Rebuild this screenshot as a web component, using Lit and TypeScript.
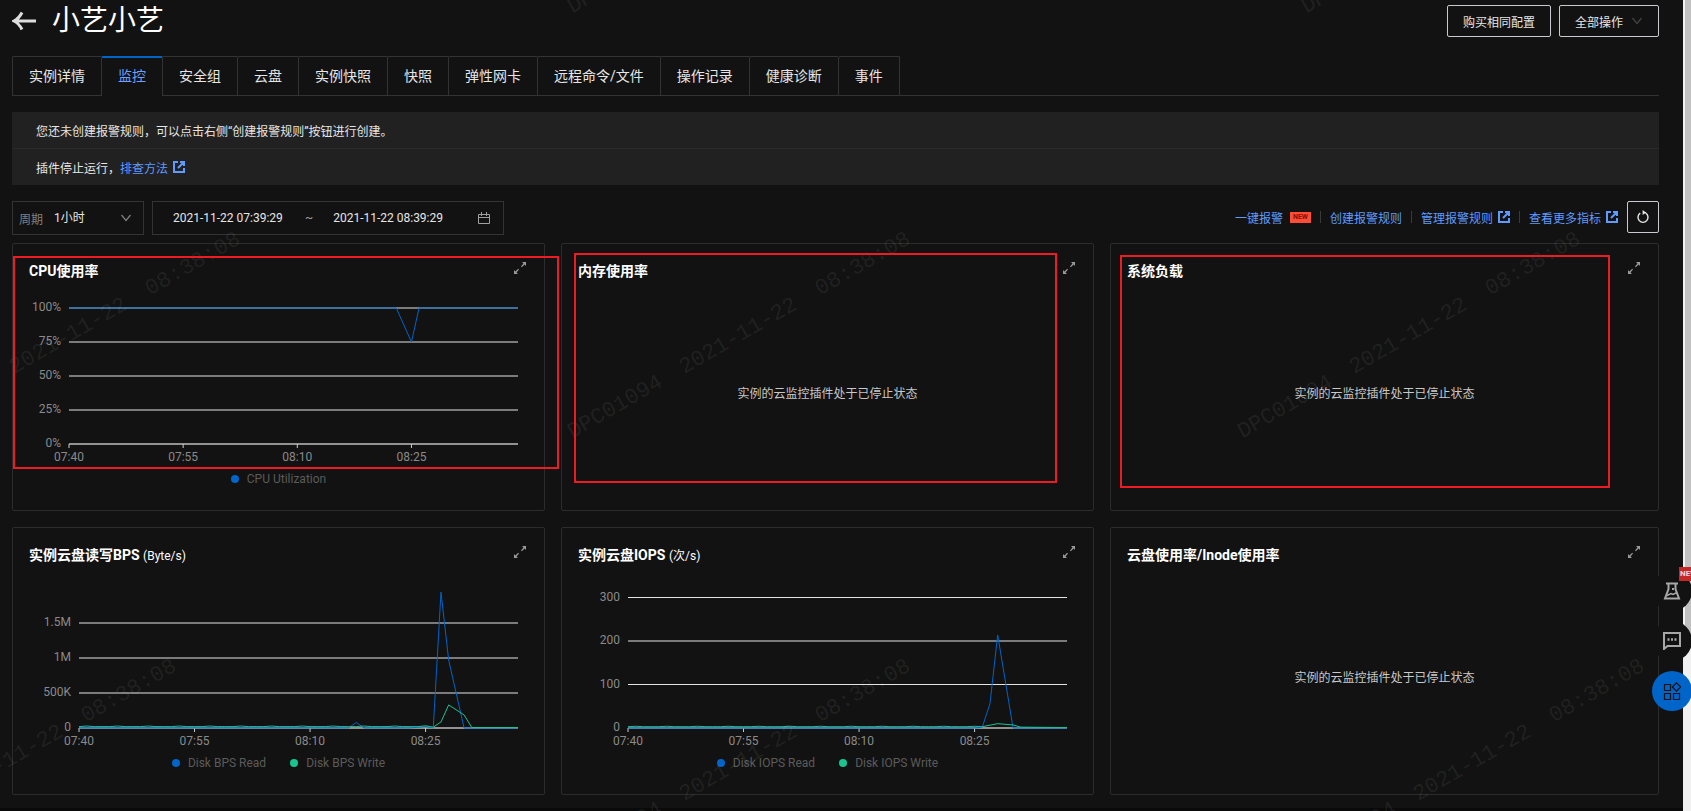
import { LitElement, html, svg, css, nothing } from "lit";
import { customElement, property, state } from "lit/decorators.js";
import { classMap } from "lit/directives/class-map.js";

interface Series {
  name: string;
  color: string;
  points: [number, number][];
}

interface ChartSpec {
  x0: number;
  minutes: number;
  unitHeight: number;
  ticks: { value: number; label: string }[];
  series: Series[];
}

interface CardSpec {
  title: string;
  unit?: string;
  mark?: string;
  chart?: ChartSpec;
}

const BLUE = "#0064c8";
const GREEN = "#1ac392";
const EMPTY_TEXT = "实例的云监控插件处于已停止状态";

/* Idle traffic with a slight ripple, up to the given minute. */
const idle = (until: number, value: number, ripple: number): [number, number][] =>
  Array.from({ length: until }, (_, m) => [m, value + (m % 4 === 1 ? ripple : 0)] as [number, number]);

const cards: CardSpec[] = [
  {
    title: "CPU使用率",
    mark: "mark-a",
    chart: {
      x0: 40,
      minutes: 59,
      unitHeight: 136 / 100,
      ticks: [0, 25, 50, 75, 100].map((value) => ({ value, label: `${value}%` })),
      series: [
        { name: "CPU Utilization", color: BLUE, points: [[0, 100], [43, 100], [45, 75], [46, 100], [59, 100]] },
      ],
    },
  },
  { title: "内存使用率", mark: "mark-b" },
  { title: "系统负载", mark: "mark-c" },
  {
    title: "实例云盘读写BPS",
    unit: "(Byte/s)",
    chart: {
      x0: 50,
      minutes: 57,
      unitHeight: 70 / 1000,
      ticks: [
        { value: 0, label: "0" },
        { value: 500, label: "500K" },
        { value: 1000, label: "1M" },
        { value: 1500, label: "1.5M" },
      ],
      series: [
        {
          name: "Disk BPS Read",
          color: BLUE,
          points: [[0, 2], [35, 2], [36, 79], [37, 2], [43, 2], [45, 20], [46, 2], [47, 1940], [48, 970], [50, 0], [57, 0]],
        },
        {
          name: "Disk BPS Write",
          color: GREEN,
          points: [...idle(45, 20, 8), [45, 32], [46, 12], [47, 86], [48, 330], [50, 186], [51, 7], [57, 7]],
        },
      ],
    },
  },
  {
    title: "实例云盘IOPS",
    unit: "(次/s)",
    chart: {
      x0: 50,
      minutes: 57,
      unitHeight: 43.5 / 100,
      ticks: [0, 100, 200, 300].map((value) => ({ value, label: `${value}` })),
      series: [
        {
          name: "Disk IOPS Read",
          color: BLUE,
          points: [[0, 0], [45, 0], [46, 2], [47, 56], [48, 214], [50, 0], [57, 0]],
        },
        {
          name: "Disk IOPS Write",
          color: GREEN,
          points: [...idle(46, 3, 1), [46, 3], [48, 10], [50, 7], [51, 2], [57, 1]],
        },
      ],
    },
  },
  { title: "云盘使用率/Inode使用率" },
];

const tabs = ["实例详情", "监控", "安全组", "云盘", "实例快照", "快照", "弹性网卡", "远程命令/文件", "操作记录", "健康诊断", "事件"];

const externalIcon = html`<svg class="ext" width="12" height="12" viewBox="0 0 12 12" fill="none" stroke="currentColor" stroke-width="2" aria-hidden="true">
  <path d="M5 1H1v10h10V7M7 1h4v4M11 1L5 7" /></svg>`;

const chevron = html`<svg class="chev" width="12" height="8" viewBox="0 0 12 8" fill="none" stroke="currentColor" stroke-width="1.2" aria-hidden="true">
  <path d="M1.5 1L6 6.5L10.5 1" /></svg>`;

@customElement("metric-chart")
export class MetricChart extends LitElement {
  static styles = css`
    :host { display: block; }
    .plot { display: block; width: 100%; height: 186px; overflow: visible; }
    .label { font-size: 12px; fill: #8a8a8a; }
    .legend { display: flex; justify-content: center; gap: 24px; margin: 0; padding: 0; list-style: none; font-size: 12px; line-height: 22px; color: #5b5b5b; }
    .item { display: flex; align-items: center; gap: 8px; }
    .dot { display: block; }
  `;

  @property({ attribute: false }) spec!: ChartSpec;
  @state() private width = 501;
  private observer = new ResizeObserver(([entry]) => {
    this.width = entry.contentRect.width;
  });

  connectedCallback() {
    super.connectedCallback();
    this.observer.observe(this);
  }

  disconnectedCallback() {
    this.observer.disconnect();
    super.disconnectedCallback();
  }

  render() {
    const { x0, minutes, unitHeight, ticks, series } = this.spec;
    const base = 162;
    const right = this.width - 10;
    const x = (m: number) => x0 + (m * (right - x0)) / minutes;
    const y = (v: number) => base - v * unitHeight;
    return html`
      <svg class="plot" role="img" aria-label=${series.map((s) => s.name).join(", ")}>
        ${ticks.map(
          (t) => svg`
            <line x1=${x0} x2=${right} y1=${y(t.value)} y2=${y(t.value)} stroke="#e4e4e4"></line>
            <text class="label" x=${x0 - 8} y=${y(t.value) + 3} text-anchor="end">${t.label}</text>`
        )}
        <line x1=${x0} x2=${right} y1=${base} y2=${base} stroke="#aaa"></line>
        ${["07:40", "07:55", "08:10", "08:25"].map(
          (t, i) => svg`
            <line x1=${x(i * 15)} x2=${x(i * 15)} y1=${base} y2=${base + 4} stroke="#ccc"></line>
            <text class="label" x=${x(i * 15)} y=${base + 17} text-anchor="middle">${t}</text>`
        )}
        ${series.map(
          (s) => svg`<polyline fill="none" stroke=${s.color} stroke-width="1"
            points=${s.points.map(([m, v]) => `${x(m)},${y(v)}`).join(" ")}></polyline>`
        )}
      </svg>
      <ul class="legend">
        ${series.map(
          (s) => html`<li class="item">
            <svg class="dot" width="8" height="8" aria-hidden="true"><circle cx="4" cy="4" r="4" fill=${s.color}></circle></svg>
            <span>${s.name}</span>
          </li>`
        )}
      </ul>
    `;
  }
}

@customElement("metric-card")
export class MetricCard extends LitElement {
  static styles = css`
    :host { display: block; }
    .card { position: relative; box-sizing: border-box; border: 1px solid #2c2c2c; border-radius: 2px; padding: 16px 16px 8px; }
    .head { display: flex; align-items: flex-start; justify-content: space-between; line-height: 22px; height: 22px; }
    .title { margin: 0; font-size: 14px; font-weight: 700; color: #fff; }
    .unit { font-size: 12px; font-weight: 400; }
    .expand { display: block; padding: 2px; border: 0; background: none; color: #9a9a9a; }
    .expand svg { display: block; }
    .body { height: 220px; }
    .empty { display: flex; align-items: center; justify-content: center; height: 100%; margin: 0; font-size: 12px; color: #c8c8c8; }
    .mark { position: absolute; box-sizing: border-box; border: 2px solid #ed1c24; pointer-events: none; z-index: 2; }
    .mark-a { inset: 12px -15px 41px 0; }
    .mark-b { inset: 9px 36px 27px 12px; }
    .mark-c { inset: 11px 48px 22px 9px; }
  `;

  @property({ attribute: false }) spec!: CardSpec;

  render() {
    const { title, unit, mark, chart } = this.spec;
    return html`<section class="card">
      <header class="head">
        <h2 class="title">${title}${unit ? html` <span class="unit">${unit}</span>` : nothing}</h2>
        <button class="expand" aria-label="放大">
          <svg width="12" height="12" viewBox="0 0 12 12" fill="currentColor" aria-hidden="true">
            <path d="M8 0H12v4L10.600 2.600L7.800 5.200L7 4.400L9.500 1.500ZM4 12H0V8L1.400 9.400L4.200 6.800L5 7.600L2.500 10.500Z" />
          </svg>
        </button>
      </header>
      <div class="body">
        ${chart ? html`<metric-chart .spec=${chart}></metric-chart>` : html`<p class="empty">${EMPTY_TEXT}</p>`}
      </div>
      ${mark ? html`<div class=${classMap({ mark: true, [mark]: true })}></div>` : nothing}
    </section>`;
  }
}

/* Origins of the repeated diagonal stamp. */
const stamps: [number, number][] = [
  [575, 4], [1309, 4],
  [-95, 429], [575, 429], [1245, 429],
  [-159, 856], [575, 856], [1309, 856],
];

@customElement("app-root")
export class AppRoot extends LitElement {
  static styles = css`
    :host { display: block; font-family: Roboto, "Noto Sans CJK SC", sans-serif; font-size: 12px; color: #e6e6e6; }
    * { box-sizing: border-box; }
    button, select, input { font-family: inherit; font-size: inherit; color: inherit; }
    .page { position: relative; display: flex; min-height: 100vh; overflow: hidden; background: #121212; }
    .main { flex: 1; min-width: 0; padding: 5px 24px 13px 12px; border-bottom: 3px solid #0a0a0a; }
    .track { width: 8px; background: #f1f1f1; padding-left: 2px; }
    .thumb { height: 635px; background: #c1c1c1; }

    .top { display: flex; align-items: center; gap: 8px; height: 32px; }
    .back { display: block; width: 32px; padding: 0; border: 0; background: none; color: #dedede; }
    .back svg { display: block; }
    .name { flex: 1; margin: 0; font-size: 28px; font-weight: 400; line-height: 32px; color: #fff; }
    .btn { display: flex; align-items: center; gap: 8px; height: 32px; padding: 0 15px; border: 1px solid #c9c9d0; border-radius: 2px; background: none; }
    .btn .chev { color: #444; }

    .tabs { display: flex; margin-top: 19px; height: 40px; }
    .tab { display: block; padding: 0 16px; border: 1px solid #333; border-right: 0; font-size: 14px; line-height: 38px; text-decoration: none; color: #e6e6e6; border-top-left-radius: 2px; }
    .tab:last-of-type { border-right: 1px solid #333; }
    .tab.active { border-top: 2px solid #0064c8; border-bottom: 0; line-height: 36px; color: #6ea0ff; }
    .rest { flex: 1; border-bottom: 1px solid #333; }

    .notice { margin-top: 16px; background: #212121; }
    .line { display: flex; align-items: center; height: 36px; margin: 0; padding: 0 24px; }
    .line + .line { height: 37px; border-top: 1px solid #2a2a2a; }
    .link { display: inline-flex; align-items: center; gap: 5px; color: #5f9bff; text-decoration: none; }
    .ext { display: block; }

    .tools { display: flex; align-items: flex-start; gap: 8px; height: 34px; margin-top: 16px; }
    .field { display: flex; align-items: center; height: 34px; border: 1px solid #333; }
    .period { width: 132px; padding: 0 11px 0 6px; gap: 11px; color: #808080; }
    .select { flex: 1; min-width: 0; padding: 0; border: 0; background: none; appearance: none; color: #e6e6e6; }
    .range { width: 352px; padding: 0 13px 0 20px; gap: 20px; color: #a0a0a0; }
    .time { width: 112px; padding: 0; border: 0; background: none; color: #e6e6e6; }
    .calendar { margin-left: auto; }
    .links { display: flex; align-items: center; height: 32px; margin-left: auto; padding-right: 1px; }
    .sep { width: 1px; height: 12px; margin: 0 9px; background: #3a3a3a; }
    .new { display: block; width: 21px; height: 11px; margin-left: 7px; background: #ff4d36; color: #7c1208; font-size: 7px; font-weight: 700; line-height: 11px; text-align: center; }
    .refresh { display: flex; align-items: center; justify-content: center; width: 32px; height: 32px; padding: 0; border: 1px solid #c9c9d0; border-radius: 2px; background: none; }

    .grid { display: grid; grid-template-columns: repeat(3, 1fr); row-gap: 16px; margin-top: 8px; }
    .cell { margin-right: 16px; min-width: 0; }
    .cell:nth-child(3n) { margin-right: 0; }

    .stamp { position: absolute; inset: 0; width: 100%; height: 100%; pointer-events: none; z-index: 1; fill: #fff; fill-opacity: 0.08; font-family: "Liberation Mono", monospace; font-size: 22px; }

    .floats { position: absolute; top: 571px; right: -1px; display: flex; flex-direction: column; gap: 10px; z-index: 3; }
    .float { display: flex; align-items: center; justify-content: center; width: 40px; height: 40px; padding: 0; border: 0; border-radius: 50%; background: #121212; color: #a8a8a8; }
    .float.primary { background: #0064c8; color: #121212; }
    .tag { position: absolute; top: -4px; left: 27px; width: 24px; height: 14px; padding-left: 1px; background: #c62828; color: #f5d5d5; font-size: 8px; font-weight: 700; line-height: 14px; text-align: left; }
  `;

  render() {
    return html`<div class="page">
      <main class="main">
        <header class="top">
          <button class="back" aria-label="返回">
            <svg width="24" height="20" viewBox="0 0 24 20" fill="none" stroke="currentColor" stroke-width="3" aria-hidden="true">
              <path d="M2 10H24M10 1.5Q7 7.5 2 10Q7 12.5 10 18.5" />
            </svg>
          </button>
          <h1 class="name">小艺小艺</h1>
          <button class="btn">购买相同配置</button>
          <button class="btn">全部操作${chevron}</button>
        </header>

        <nav class="tabs">
          ${tabs.map((t) => html`<a href="#" class=${classMap({ tab: true, active: t === "监控" })}>${t}</a>`)}
          <span class="rest"></span>
        </nav>

        <div class="notice">
          <p class="line">您还未创建报警规则，可以点击右侧“创建报警规则”按钮进行创建。</p>
          <p class="line">插件停止运行，<a class="link" href="#">排查方法${externalIcon}</a></p>
        </div>

        <div class="tools">
          <label class="field period">周期
            <select class="select"><option>1小时</option></select>
            ${chevron}
          </label>
          <div class="field range">
            <input class="time" aria-label="开始时间" value="2021-11-22 07:39:29" />
            <span>~</span>
            <input class="time" aria-label="结束时间" value="2021-11-22 08:39:29" />
            <svg class="calendar" width="12" height="13" viewBox="0 0 12 13" fill="none" stroke="currentColor" aria-hidden="true">
              <path d="M.5 2.5h11v9H.5zM.5 5.5h11M3.5 0v4M8.5 0v4" />
            </svg>
          </div>
          <div class="links">
            <a class="link" href="#">一键报警</a><span class="new">NEW</span>
            <span class="sep"></span>
            <a class="link" href="#">创建报警规则</a>
            <span class="sep"></span>
            <a class="link" href="#">管理报警规则${externalIcon}</a>
            <span class="sep"></span>
            <a class="link" href="#">查看更多指标${externalIcon}</a>
          </div>
          <button class="refresh" aria-label="刷新">
            <svg width="14" height="14" viewBox="0 0 14 14" fill="none" stroke="currentColor" stroke-width="1.4" aria-hidden="true">
              <path d="M4.2 3.2A5 5 0 1 0 9.8 3.2M7 2.6H10" />
              <path d="M6.6 0L10 2.6L6.6 5Z" fill="currentColor" stroke="none" />
            </svg>
          </button>
        </div>

        <div class="grid">
          ${cards.map((c) => html`<metric-card class="cell" .spec=${c}></metric-card>`)}
        </div>
      </main>

      <div class="track" aria-hidden="true"><div class="thumb"></div></div>

      <svg class="stamp" aria-hidden="true">
        ${stamps.map(
          ([x, y]) => svg`<g transform="translate(${x} ${y}) rotate(-30)">
            <text x="-7" y="7">DPC01094</text>
            <text x="122" y="7">2021-11-22</text>
            <text x="279" y="7">08:38:08</text>
          </g>`
        )}
      </svg>

      <aside class="floats">
        <button class="float" aria-label="实验室">
          <svg width="18" height="18" viewBox="0 0 18 18" fill="none" stroke="currentColor" stroke-width="2" aria-hidden="true">
            <path d="M3 1.5h12M5.5 2v5L2 16.5h14L12.5 7V2" />
            <path d="M4 13.5L8 11.5L10 12.5L14 10.5" stroke-width="1.5" />
            <path d="M9 7h2" />
          </svg>
          <span class="tag">NEW</span>
        </button>
        <button class="float" aria-label="咨询">
          <svg width="18" height="18" viewBox="0 0 18 18" fill="none" stroke="currentColor" stroke-width="2" aria-hidden="true">
            <path d="M1 1H17V14H4.5L1 17Z" />
            <path d="M4.5 7.5h2M8 7.5h2M11.5 7.5h2" stroke-width="2.5" />
          </svg>
        </button>
        <button class="float primary" aria-label="应用">
          <svg width="18" height="18" viewBox="0 0 18 18" fill="none" stroke="currentColor" stroke-width="1.2" aria-hidden="true">
            <path d="M1.5 2.5h6v6h-6zM1.5 11.5h6v6h-6zM10.5 11.5h6v6h-6zM13.5 .8L17.7 5L13.5 9.2L9.3 5Z" />
          </svg>
        </button>
      </aside>
    </div>`;
  }
}
